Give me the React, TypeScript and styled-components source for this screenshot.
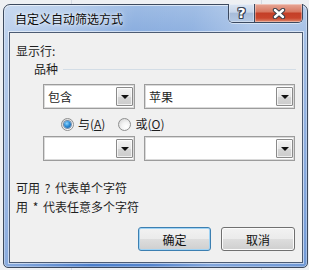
import React from "react";
import styled, { createGlobalStyle, css } from "styled-components";

const FONT = `"Noto Sans CJK SC", "Noto Sans", sans-serif`;

const GlobalStyle = createGlobalStyle`
  html, body { margin: 0; padding: 0; }
  body {
    background: #eceef1;
    font-family: ${FONT};
    font-size: 12px;
    color: #1e1e1e;
  }
  * { box-sizing: border-box; }
`;

const Desktop = styled.div`
  width: 309px;
  height: 270px;
  padding: 4px 0 0 3px;
  background-color: #eef0f3;
  background-image:
    linear-gradient(to right, transparent 71px, #d6dbe3 71px, #d6dbe3 72px, transparent 72px),
    linear-gradient(to right, transparent 261px, #d6dbe3 261px, #d6dbe3 262px, transparent 262px);
`;

const Window = styled.div`
  width: 305px;
  height: 264px;
  border: 1px solid #3d4a5e;
  border-radius: 7px 7px 5px 5px;
  padding: 0 4px 4px 5px;
  display: flex;
  flex-direction: column;
  box-shadow: inset 0 1px 0 rgba(255, 255, 255, 0.6), inset 1px 0 0 rgba(255, 255, 255, 0.35),
    inset -1px 0 0 rgba(255, 255, 255, 0.35), inset 0 -1px 0 rgba(255, 255, 255, 0.3);
  background:
    linear-gradient(100deg,
      rgba(255, 255, 255, 0.45) 0%,
      rgba(255, 255, 255, 0.3) 18%,
      rgba(255, 255, 255, 0) 38%,
      rgba(255, 255, 255, 0.05) 55%,
      rgba(255, 255, 255, 0.3) 72%,
      rgba(255, 255, 255, 0.2) 100%),
    linear-gradient(to bottom, #9dbbe4 0%, #84a9dd 14%, #6893d5 60%, #4c7fcc 100%);
`;

const TitleBar = styled.div`
  height: 27px;
  display: flex;
  justify-content: space-between;
  align-items: flex-start;
`;

const Title = styled.div`
  margin: 6px 0 0 6px;
  font-size: 12px;
  line-height: 16px;
  color: #0b0b0b;
  text-shadow: 0 0 6px rgba(255, 255, 255, 0.9), 0 0 3px rgba(255, 255, 255, 0.8);
`;

const CaptionGroup = styled.div`
  display: flex;
  margin-top: -1px;
  height: 19px;
  border: 1px solid #3b4960;
  border-top: none;
  border-radius: 0 0 5px 5px;
  overflow: hidden;
  box-shadow: 0 1px 0 rgba(255, 255, 255, 0.5);
`;

const CaptionButton = styled.div<{ $kind: "help" | "close" }>`
  height: 100%;
  display: flex;
  align-items: center;
  justify-content: center;
  box-shadow: inset 0 0 0 1px rgba(255, 255, 255, 0.35);
  ${(p) =>
    p.$kind === "help"
      ? css`
          width: 26px;
          border-right: 1px solid #3b4960;
          background: linear-gradient(to bottom, #dbe5f2 0%, #c6d5ea 45%, #a7bcd9 52%, #b4c8e3 100%);
        `
      : css`
          width: 47px;
          background: linear-gradient(to bottom, #e7a797 0%, #d87a63 42%, #c43f27 52%, #c9452c 78%, #de8a6f 100%);
        `}
`;

const HelpGlyph = styled.span`
  font-family: "DejaVu Sans", sans-serif;
  font-weight: bold;
  font-size: 14px;
  line-height: 14px;
  color: #ffffff;
  text-shadow: 1px 0 0 #3a4455, -1px 0 0 #3a4455, 0 1px 0 #3a4455, 0 -1px 0 #3a4455,
    1px 1px 0 #3a4455, -1px -1px 0 #3a4455, 1px -1px 0 #3a4455, -1px 1px 0 #3a4455;
`;

const Client = styled.div`
  flex: 1;
  background: #f0f0f0;
  border: 1px solid #4c5b73;
  box-shadow: 0 0 0 1px rgba(255, 255, 255, 0.55);
  padding: 0 6px 0 6px;
  display: flex;
  flex-direction: column;
`;

const Text = styled.div<{ $top: number }>`
  margin-top: ${(p) => p.$top}px;
  line-height: 16px;
  height: 16px;
  white-space: pre;
  word-spacing: 2px;
`;

const GroupHeader = styled.div`
  margin-top: 2px;
  margin-left: 18px;
  display: flex;
  align-items: center;
  height: 16px;
  line-height: 16px;
`;

const Rule = styled.div`
  flex: 1;
  height: 1px;
  margin-left: 5px;
  background: #d3dde6;
`;

const ComboRow = styled.div<{ $top: number }>`
  margin-top: ${(p) => p.$top}px;
  margin-left: 27px;
  display: flex;
  gap: 9px;
  height: 25px;
`;

const Combo = styled.div<{ $w: number }>`
  width: ${(p) => p.$w}px;
  height: 25px;
  background: #ffffff;
  border: 1px solid #9c9c9c;
  box-shadow: inset 0 0 0 1px #dadada;
  display: flex;
  align-items: stretch;
  padding: 2px 1px 2px 4px;
`;

const ComboText = styled.div`
  flex: 1;
  line-height: 19px;
  font-size: 12px;
`;

const DropButton = styled.div`
  width: 17px;
  border: 1px solid #8a8a8a;
  border-radius: 1px;
  background: linear-gradient(to bottom, #f4f4f4 0%, #e6e6e6 50%, #d6d6d6 51%, #cccccc 100%);
  box-shadow: inset 0 0 0 1px rgba(255, 255, 255, 0.7);
  display: flex;
  align-items: center;
  justify-content: center;
`;

const Arrow = styled.div`
  width: 0;
  height: 0;
  border-left: 4px solid transparent;
  border-right: 4px solid transparent;
  border-top: 4px solid #111;
  margin-top: 1px;
`;

const RadioRow = styled.div`
  margin-top: 7px;
  margin-left: 45px;
  height: 16px;
  display: flex;
  align-items: center;
`;

const RadioItem = styled.label<{ $gap: number }>`
  display: flex;
  align-items: center;
  margin-right: ${(p) => p.$gap}px;
  line-height: 16px;
`;

const RadioCircle = styled.span<{ $checked?: boolean }>`
  width: 13px;
  height: 13px;
  border-radius: 50%;
  border: 1px solid #8e8f8f;
  background: radial-gradient(circle at 65% 70%, #ffffff 0%, #f4f4f4 40%, #cfcfcf 100%);
  margin-right: 4px;
  display: flex;
  align-items: center;
  justify-content: center;
  ${(p) =>
    p.$checked &&
    css`
      &::after {
        content: "";
        width: 7px;
        height: 7px;
        border-radius: 50%;
        background: radial-gradient(circle at 40% 35%, #8fd6ff 0%, #2f8fd8 45%, #0d4f91 100%);
        box-shadow: 0 0 0 1px rgba(20, 60, 110, 0.55);
      }
    `}
`;

const Buttons = styled.div`
  margin-top: 12px;
  margin-right: 1px;
  display: flex;
  justify-content: flex-end;
  gap: 10px;
`;

const Button = styled.button<{ $default?: boolean; $w: number }>`
  width: ${(p) => p.$w}px;
  height: 24px;
  font-family: ${FONT};
  font-size: 12px;
  color: #111;
  border-radius: 3px;
  padding: 0;
  border: 1px solid ${(p) => (p.$default ? "#3c7fb1" : "#707070")};
  box-shadow: inset 0 0 0 1px ${(p) => (p.$default ? "#9fd3f5" : "#fbfbfb")};
  background: linear-gradient(to bottom, #f2f2f2 0%, #ebebeb 50%, #dddddd 51%, #cfcfcf 100%);
`;

function CloseGlyph() {
  return (
    <svg width="14" height="11" viewBox="0 0 14 11">
      <path d="M3 2 L11 9 M11 2 L3 9" stroke="#3a3f4a" strokeWidth="4.4" strokeLinecap="round" />
      <path d="M3 2 L11 9 M11 2 L3 9" stroke="#ffffff" strokeWidth="2.4" strokeLinecap="round" />
    </svg>
  );
}

function ComboBox({ width, value }: { width: number; value?: string }) {
  return (
    <Combo $w={width}>
      <ComboText>{value ?? ""}</ComboText>
      <DropButton>
        <Arrow />
      </DropButton>
    </Combo>
  );
}

export default function App() {
  return (
    <>
      <GlobalStyle />
      <Desktop>
        <Window>
          <TitleBar>
            <Title>自定义自动筛选方式</Title>
            <CaptionGroup>
              <CaptionButton $kind="help">
                <HelpGlyph>?</HelpGlyph>
              </CaptionButton>
              <CaptionButton $kind="close">
                <CloseGlyph />
              </CaptionButton>
            </CaptionGroup>
          </TitleBar>
          <Client>
            <Text $top={10}>显示行:</Text>
            <GroupHeader>
              品种
              <Rule />
            </GroupHeader>
            <ComboRow $top={7}>
              <ComboBox width={92} value="包含" />
              <ComboBox width={151} value="苹果" />
            </ComboRow>
            <RadioRow>
              <RadioItem $gap={13}>
                <RadioCircle $checked />
                <span>
                  与(<u>A</u>)
                </span>
              </RadioItem>
              <RadioItem $gap={0}>
                <RadioCircle />
                <span>
                  或(<u>O</u>)
                </span>
              </RadioItem>
            </RadioRow>
            <ComboRow $top={4}>
              <ComboBox width={92} />
              <ComboBox width={151} />
            </ComboRow>
            <Text $top={19}>可用 ? 代表单个字符</Text>
            <Text $top={3}>用 * 代表任意多个字符</Text>
            <Buttons>
              <Button $default $w={73}>确定</Button>
              <Button $w={74}>取消</Button>
            </Buttons>
          </Client>
        </Window>
      </Desktop>
    </>
  );
}
